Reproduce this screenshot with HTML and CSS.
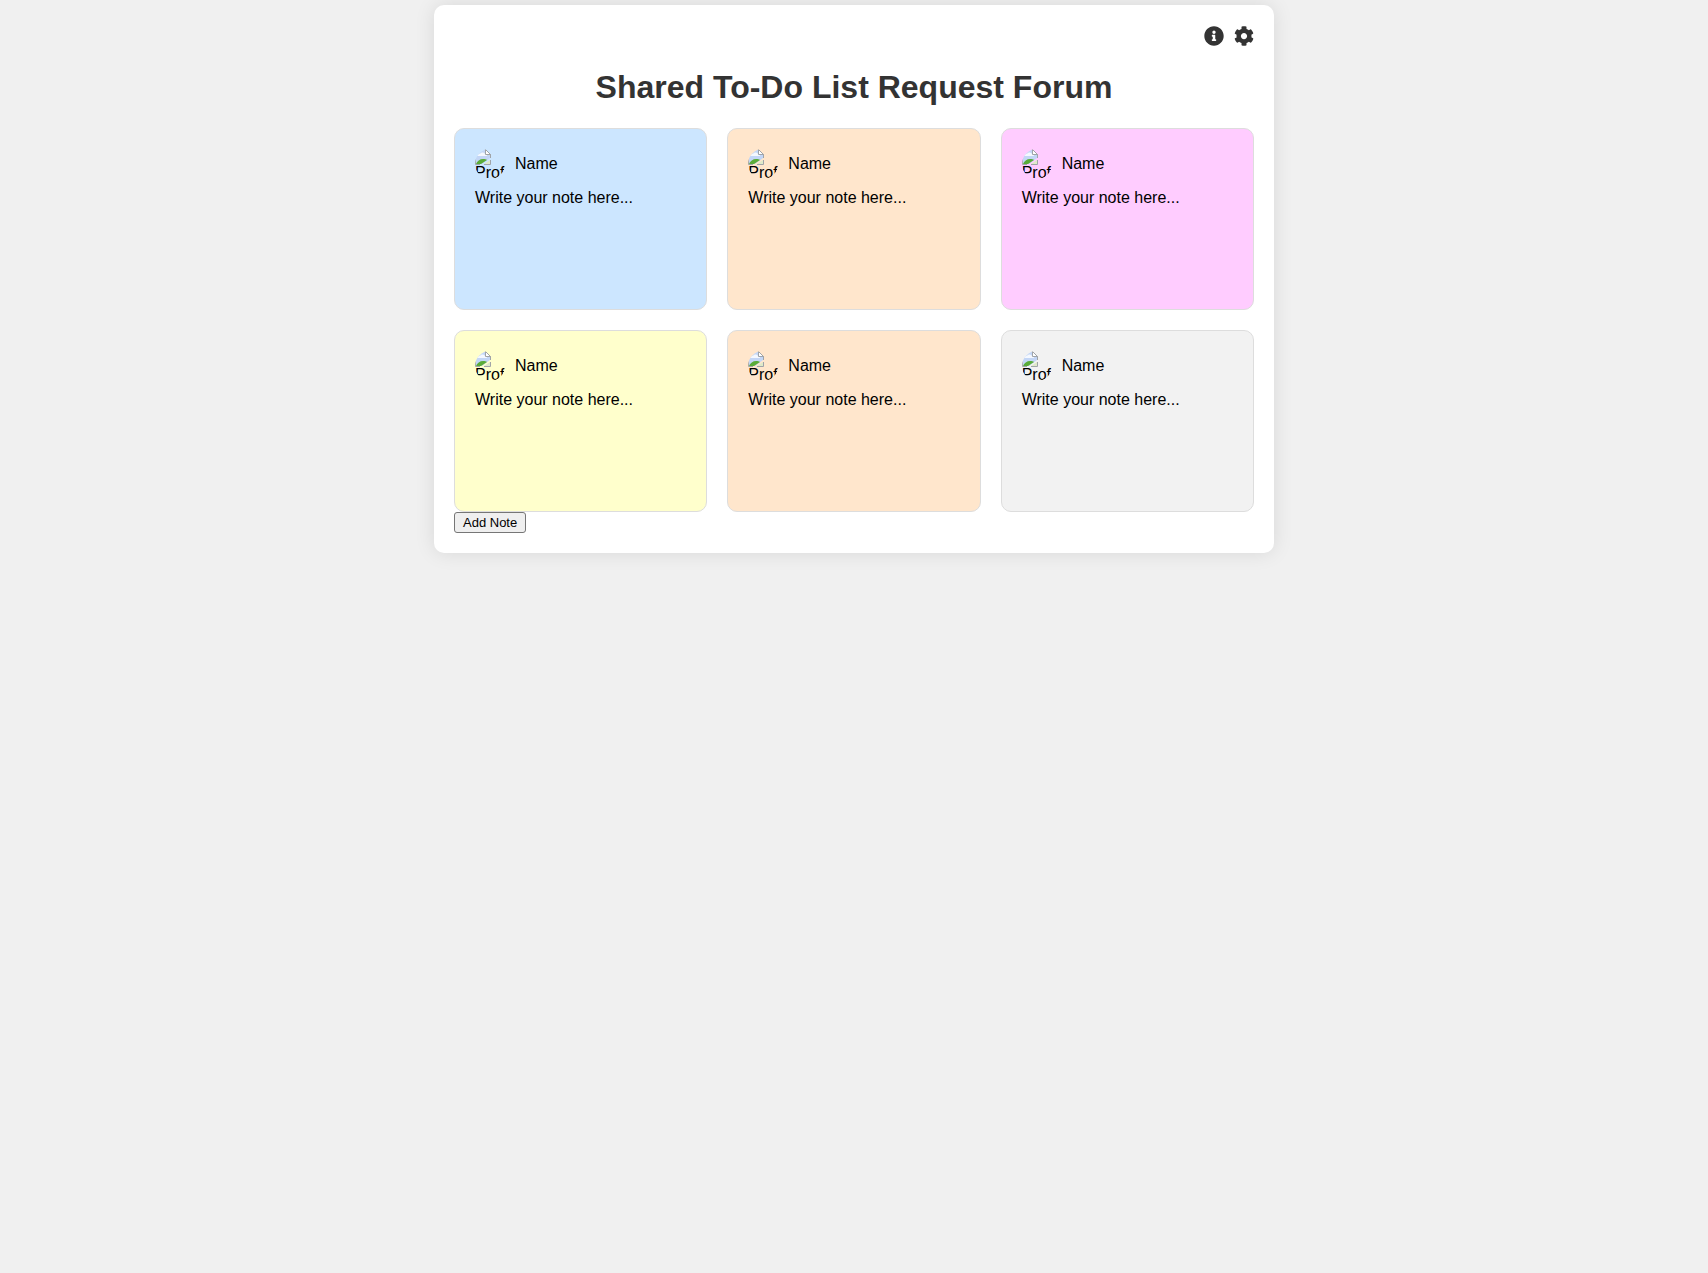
FILE: index.html
```html
<!DOCTYPE html>
<html lang="en">
<head>
<meta charset="utf-8">
<meta name="viewport" content="width=device-width, initial-scale=1">
<title>Shared To-Do List Request Forum</title>
<link rel="stylesheet" href="styles.css">
</head>
<body>
<svg class="sprite" aria-hidden="true">
  <symbol id="picture" viewBox="0 0 16 16">
    <path d="M1 1h10l4 4v4L7 15H1z" fill="#c3d6f6"/>
    <path d="M1 6c1-2 3-2 4-1 1-2 4-2 5 0 1 0 2 1 2 2H1z" fill="#f4f8ff"/>
    <path d="M1 15c1-3 4-5 7-5 2 0 3 0 4 1l-6 4z" fill="#5aac38"/>
    <path d="M15 11v4H9z" fill="#dfeac9"/>
    <path d="M.5 0v15.500H5M0 .5h11M15.500 5v4M15.500 11v4.500H9" fill="none" stroke="#a0a4a8"/>
    <path d="M10.500.5v5h5z" fill="#fff" stroke="#a0a4a8"/>
  </symbol>
</svg>
<main class="container">
  <div class="toolbar">
    <button class="icon-button" type="button" aria-label="Information">
      <svg viewBox="0 0 512 512"><path d="M256 8C119.043 8 8 119.083 8 256c0 136.997 111.043 248 248 248s248-111.003 248-248C504 119.083 392.957 8 256 8zm0 110c23.196 0 42 18.804 42 42s-18.804 42-42 42-42-18.804-42-42 18.804-42 42-42zm56 254c0 6.627-5.373 12-12 12h-88c-6.627 0-12-5.373-12-12v-24c0-6.627 5.373-12 12-12h12v-64h-12c-6.627 0-12-5.373-12-12v-24c0-6.627 5.373-12 12-12h64c6.627 0 12 5.373 12 12v100h12c6.627 0 12 5.373 12 12v24z"/></svg>
    </button>
    <button class="icon-button" type="button" aria-label="Settings">
      <svg viewBox="0 0 512 512"><path d="M487.400 315.700l-42.600-24.600c4.300-23.200 4.300-47 0-70.200l42.600-24.600c4.900-2.800 7.100-8.600 5.500-14-11.100-35.600-30-67.800-54.700-94.600-3.800-4.100-10-5.100-14.800-2.300L380.800 110c-17.900-15.400-38.500-27.300-60.800-35.100V25.800c0-5.600-3.900-10.500-9.400-11.700-36.700-8.200-74.300-7.800-109.200 0-5.500 1.200-9.400 6.100-9.400 11.700V75c-22.200 7.900-42.800 19.800-60.800 35.100L88.700 85.500c-4.900-2.800-11-1.900-14.800 2.300-24.700 26.700-43.600 58.900-54.700 94.600-1.700 5.400.6 11.200 5.500 14L67.300 221c-4.300 23.200-4.300 47 0 70.200l-42.600 24.600c-4.900 2.800-7.100 8.600-5.500 14 11.100 35.600 30 67.800 54.700 94.600 3.800 4.100 10 5.100 14.800 2.300l42.600-24.600c17.900 15.400 38.500 27.300 60.800 35.100v49.200c0 5.600 3.900 10.500 9.400 11.700 36.700 8.200 74.300 7.800 109.200 0 5.500-1.200 9.400-6.100 9.400-11.700v-49.200c22.200-7.900 42.800-19.800 60.800-35.100l42.600 24.600c4.900 2.800 11 1.900 14.800-2.300 24.700-26.700 43.600-58.900 54.700-94.600 1.500-5.500-.7-11.300-5.600-14.100zM256 336c-44.100 0-80-35.900-80-80s35.900-80 80-80 80 35.900 80 80-35.900 80-80 80z"/></svg>
    </button>
  </div>
  <h1 class="title">Shared To-Do List Request Forum</h1>
  <div class="notes">
    <article class="note blue">
      <div class="profile"><span class="avatar"><svg><use href="#picture"/></svg>Prof</span><span>Name</span></div>
      <div class="note-text">Write your note here...</div>
    </article>
    <article class="note orange">
      <div class="profile"><span class="avatar"><svg><use href="#picture"/></svg>Prof</span><span>Name</span></div>
      <div class="note-text">Write your note here...</div>
    </article>
    <article class="note pink">
      <div class="profile"><span class="avatar"><svg><use href="#picture"/></svg>Prof</span><span>Name</span></div>
      <div class="note-text">Write your note here...</div>
    </article>
    <article class="note yellow">
      <div class="profile"><span class="avatar"><svg><use href="#picture"/></svg>Prof</span><span>Name</span></div>
      <div class="note-text">Write your note here...</div>
    </article>
    <article class="note orange">
      <div class="profile"><span class="avatar"><svg><use href="#picture"/></svg>Prof</span><span>Name</span></div>
      <div class="note-text">Write your note here...</div>
    </article>
    <article class="note gray">
      <div class="profile"><span class="avatar"><svg><use href="#picture"/></svg>Prof</span><span>Name</span></div>
      <div class="note-text">Write your note here...</div>
    </article>
  </div>
  <button class="add-note" type="button">Add Note</button>
</main>
</body>
</html>
```
FILE: styles.css
```css
* {
  box-sizing: border-box;
}

body {
  min-height: 100vh;
  margin: 0;
  padding: 5px;
  background: #f0f0f0;
  color: #000;
  font: 16px/18px "Liberation Sans", Arial, sans-serif;
}

.sprite {
  display: none;
}

.container {
  max-width: 840px;
  margin: 0 auto;
  padding: 20px;
  border-radius: 10px;
  background: #fff;
  box-shadow: 0 0 20px rgba(0, 0, 0, 0.1);
}

.toolbar {
  display: flex;
  justify-content: flex-end;
  gap: 10px;
  padding-top: 1px;
}

.icon-button {
  width: 20px;
  height: 20px;
  padding: 0;
  border: 0;
  background: none;
  color: #333;
  cursor: pointer;
}

.icon-button svg {
  display: block;
  width: 20px;
  height: 20px;
  fill: currentColor;
}

.title {
  margin: 23px 0 22px;
  color: #333;
  font-size: 32px;
  line-height: 37px;
  text-align: center;
}

.notes {
  display: grid;
  grid-template-columns: repeat(auto-fill, minmax(240px, 1fr));
  gap: 20px;
}

.note {
  min-height: 182px;
  padding: 20px;
  border: 1px solid #ddd;
  border-radius: 10px;
}

.blue { background: #cce6ff; }
.orange { background: #ffe6cc; }
.pink { background: #ffccff; }
.yellow { background: #ffffcc; }
.gray { background: #f2f2f2; }

.profile {
  display: flex;
  align-items: center;
  gap: 10px;
  margin-bottom: 10px;
}

.avatar {
  width: 30px;
  height: 30px;
  border-radius: 50%;
  line-height: 16px;
  overflow: hidden;
}

.avatar svg {
  display: block;
  width: 16px;
  height: 16px;
}

.add-note {
  display: block;
  padding: 1px 8px;
  border: 1px solid #767676;
  border-radius: 3px;
  background: #efefef;
  color: #000;
  font-family: inherit;
  font-size: 13px;
  line-height: 17px;
}
```
